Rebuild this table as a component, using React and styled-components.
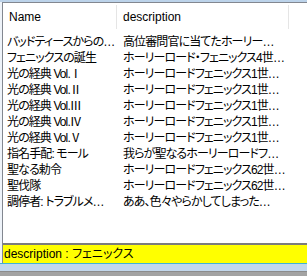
import React from "react";
import styled, { createGlobalStyle } from "styled-components";

const Global = createGlobalStyle`
  html, body { margin: 0; padding: 0; }
  body {
    background: #eef3f9;
    font-family: "Liberation Sans", "Noto Sans CJK JP", sans-serif;
    font-size: 12px;
    color: #000;
  }
`;

const Frame = styled.div`
  width: 307px;
  height: 276px;
  display: flex;
  flex-direction: column;
  overflow: hidden;
  background: #eef3f9;
`;

const TopBand = styled.div`
  height: 2px;
  flex: none;
  background: #bcd3ea;
`;

const Middle = styled.div`
  flex: 1;
  min-height: 0;
  display: flex;
  padding-left: 2px;
`;

const Content = styled.div`
  flex: 1;
  min-width: 0;
  display: flex;
  flex-direction: column;
  border-left: 1px solid #828790;
`;

const List = styled.div`
  flex: 1;
  min-height: 0;
  background: #fff;
  border-top: 1px solid #828790;
  display: flex;
  flex-direction: column;
`;

const Columns = `
  display: grid;
  grid-template-columns: 114px 172px 1fr;
`;

const Header = styled.div`
  ${Columns}
  height: 31px;
  flex: none;
`;

const HeaderCell = styled.div`
  position: relative;
  display: flex;
  align-items: center;
  padding: 0 0 4px 6px;
  white-space: nowrap;
  &::after {
    content: "";
    display: ${(p) => (p.$noDivider ? "none" : "block")};
    position: absolute;
    right: 0;
    top: 2px;
    bottom: 5px;
    width: 1px;
    background: #e5e5e5;
  }
`;

const Row = styled.div`
  ${Columns}
  height: 16px;
  flex: none;
`;

const Cell = styled.div`
  padding-left: ${(p) => (p.$first ? "4px" : "6px")};
  padding-right: 2px;
  line-height: 16px;
  white-space: nowrap;
  overflow: hidden;
  text-overflow: ellipsis;
  font-feature-settings: "palt";
  letter-spacing: -0.9px;
`;

const StatusBar = styled.div`
  height: 18px;
  flex: none;
  background: #ffff00;
  border-top: 2px solid #7c7c7c;
  padding-left: 1px;
  line-height: 18px;
  white-space: nowrap;
  font-feature-settings: "palt";
`;

const BottomBand = styled.div`
  height: 7px;
  flex: none;
  background: #c2d7ec;
  border-top: 1px solid #3fb2d6;
`;

const BottomGray = styled.div`
  height: 4px;
  flex: none;
  background: #a3a3a3;
  border-top: 1px solid #8c8c8c;
`;

const rows = [
  ["バッドティースからの…", "高位審問官に当てたホーリー…"],
  ["フェニックスの誕生", "ホーリーロード・フェニックス4世…"],
  ["光の経典 Vol.Ⅰ", "ホーリーロードフェニックス1世…"],
  ["光の経典 Vol.Ⅱ", "ホーリーロードフェニックス1世…"],
  ["光の経典 Vol.Ⅲ", "ホーリーロードフェニックス1世…"],
  ["光の経典 Vol.Ⅳ", "ホーリーロードフェニックス1世…"],
  ["光の経典 Vol.Ⅴ", "ホーリーロードフェニックス1世…"],
  ["指名手配: モール", "我らが聖なるホーリーロードフ…"],
  ["聖なる勅令", "ホーリーロードフェニックス62世…"],
  ["聖伐隊", "ホーリーロードフェニックス62世…"],
  ["調停者: トラブルメ…", "ああ、色々やらかしてしまった…"],
];

export default function App() {
  return (
    <>
      <Global />
      <Frame>
        <TopBand />
        <Middle>
          <Content>
            <List>
              <Header>
                <HeaderCell>Name</HeaderCell>
                <HeaderCell>description</HeaderCell>
                <HeaderCell $noDivider />
              </Header>
              {rows.map(([name, desc], i) => (
                <Row key={i}>
                  <Cell $first>{name}</Cell>
                  <Cell>{desc}</Cell>
                  <Cell />
                </Row>
              ))}
            </List>
            <StatusBar>description : フェニックス</StatusBar>
          </Content>
        </Middle>
        <BottomBand />
        <BottomGray />
      </Frame>
    </>
  );
}
